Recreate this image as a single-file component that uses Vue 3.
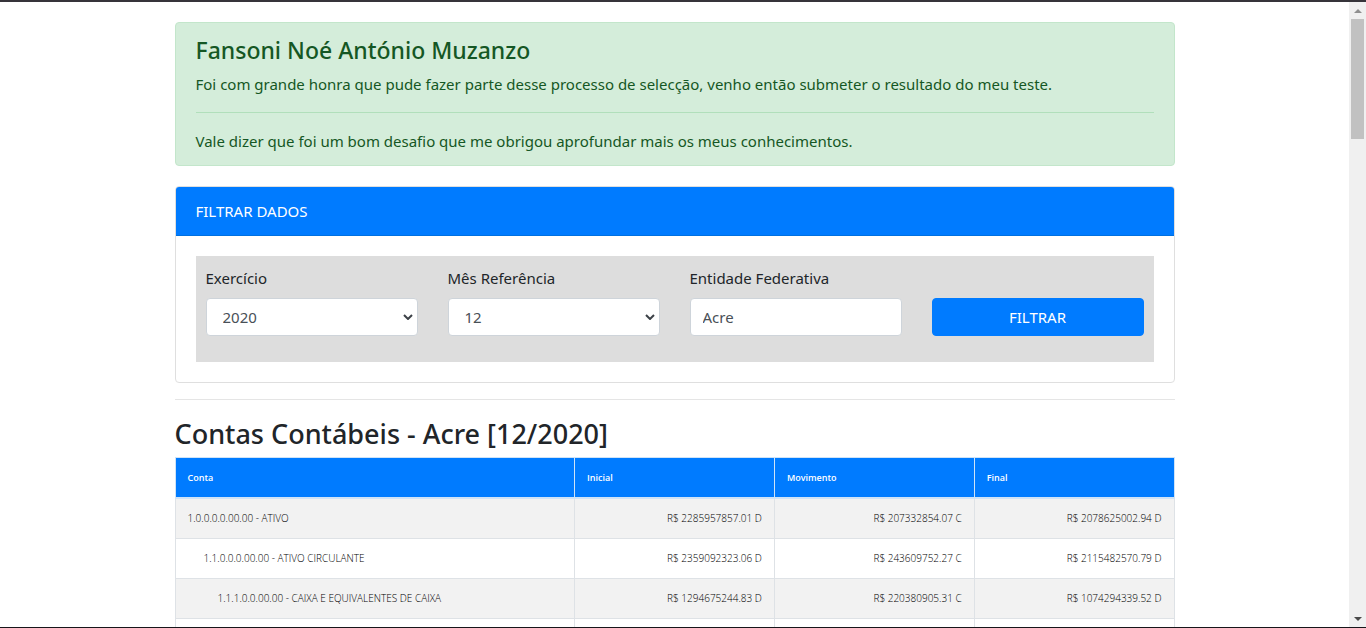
<script setup>
import { ref } from 'vue'

const year = ref('2020')
const month = ref('12')
const entity = ref('Acre')

const years = ['2020', '2019', '2018']
const months = ['12', '11', '10', '09', '08', '07', '06', '05', '04', '03', '02', '01']

const columns = ['Conta', 'Inicial', 'Movimento', 'Final']
const rows = [
  { level: 0, name: '1.0.0.0.0.00.00 - ATIVO', values: ['R$ 2285957857.01 D', 'R$ 207332854.07 C', 'R$ 2078625002.94 D'] },
  { level: 1, name: '1.1.0.0.0.00.00 - ATIVO CIRCULANTE', values: ['R$ 2359092323.06 D', 'R$ 243609752.27 C', 'R$ 2115482570.79 D'] },
  { level: 2, name: '1.1.1.0.0.00.00 - CAIXA E EQUIVALENTES DE CAIXA', values: ['R$ 1294675244.83 D', 'R$ 220380905.31 C', 'R$ 1074294339.52 D'] },
  { level: 3, name: '', values: ['', '', ''] },
]
</script>

<template>
  <div class="window">
    <div class="viewport">
      <main class="page">
        <div class="container">
          <section class="alert">
            <h4>Fansoni Noé António Muzanzo</h4>
            <p>Foi com grande honra que pude fazer parte desse processo de selecção, venho então submeter o resultado do meu teste.</p>
            <hr />
            <p>Vale dizer que foi um bom desafio que me obrigou aprofundar mais os meus conhecimentos.</p>
          </section>

          <section class="card">
            <div class="card-header">FILTRAR DADOS</div>
            <div class="card-body">
              <form class="filters" @submit.prevent>
                <div class="field">
                  <label for="year">Exercício</label>
                  <div class="select-wrap">
                    <select id="year" v-model="year" class="control">
                      <option v-for="y in years" :key="y">{{ y }}</option>
                    </select>
                    <svg class="chevron" viewBox="0 0 10 6" aria-hidden="true"><path d="M1 1l4 4 4-4" /></svg>
                  </div>
                </div>
                <div class="field">
                  <label for="month">Mês Referência</label>
                  <div class="select-wrap">
                    <select id="month" v-model="month" class="control">
                      <option v-for="m in months" :key="m">{{ m }}</option>
                    </select>
                    <svg class="chevron" viewBox="0 0 10 6" aria-hidden="true"><path d="M1 1l4 4 4-4" /></svg>
                  </div>
                </div>
                <div class="field">
                  <label for="entity">Entidade Federativa</label>
                  <input id="entity" v-model="entity" type="text" class="control" />
                </div>
                <div class="field action">
                  <button type="submit">FILTRAR</button>
                </div>
              </form>
            </div>
          </section>

          <hr class="divider" />

          <h3>Contas Contábeis - Acre [12/2020]</h3>
          <table>
            <thead>
              <tr>
                <th v-for="c in columns" :key="c" scope="col">{{ c }}</th>
              </tr>
            </thead>
            <tbody>
              <tr v-for="row in rows" :key="row.level">
                <td :class="'level-' + row.level">{{ row.name }}</td>
                <td v-for="(v, i) in row.values" :key="i" class="amount">{{ v }}</td>
              </tr>
            </tbody>
          </table>
        </div>
      </main>
      <div class="scrollbar" aria-hidden="true">
        <svg class="arrow up" viewBox="0 0 8 4"><path d="M0 4L4 0l4 4z" /></svg>
        <div class="thumb"></div>
        <svg class="arrow down" viewBox="0 0 8 4"><path d="M0 0l4 4 4-4z" /></svg>
      </div>
    </div>
  </div>
</template>

<style>
body {
  margin: 0;
  overflow: hidden;
}
</style>

<style scoped>
* {
  box-sizing: border-box;
}

.window {
  display: flex;
  flex-direction: column;
  height: 100vh;
  border-top: 2px solid #36343a;
  border-bottom: 1px solid #17151a;
  background: #fff;
  color: #212529;
  font: 400 15px/24px "Segoe UI", "Noto Sans", "Open Sans", sans-serif;
}

.viewport {
  display: flex;
  flex: 1;
  min-height: 0;
}

.page {
  flex: 1;
  overflow: hidden;
  padding-top: 20px;
}

.container {
  max-width: 1000px;
  margin: 0 auto;
}

h3,
h4 {
  margin: 0 0 6px;
  font-weight: 500;
}

h3 {
  font-size: 27px;
  line-height: 35px;
}

h4 {
  font-size: 23px;
  line-height: 31px;
}

p {
  margin: 0;
}

hr {
  height: 1px;
  margin: 16px 0;
  border: 0;
  background: #e5e5e5;
}

.alert {
  margin-bottom: 20px;
  padding: 12px 20px;
  border: 1px solid #c3e6cb;
  border-radius: 4px;
  background: #d4edda;
  color: #155724;
}

.alert hr {
  background: #b1dfbb;
}

.card {
  border: 1px solid #dfdfdf;
  border-radius: 4px;
  overflow: hidden;
}

.card-header {
  padding: 12px 20px;
  border-bottom: 1px solid #0070e0;
  background: #007bff;
  color: #fff;
}

.card-body {
  padding: 20px;
}

.filters {
  display: grid;
  grid-template-columns: repeat(4, 1fr);
  gap: 30px;
  padding: 10px 10px 26px;
  background: #ddd;
}

.field {
  display: flex;
  flex-direction: column;
  gap: 8px;
  min-width: 0;
}

.action {
  justify-content: flex-end;
}

.select-wrap {
  position: relative;
}

.control {
  display: block;
  width: 100%;
  height: 38px;
  padding: 6px 12px;
  border: 1px solid #ced4da;
  border-radius: 4px;
  background: #fff;
  color: #495057;
  font: inherit;
  appearance: none;
}

select.control {
  padding-left: 16px;
}

.chevron {
  position: absolute;
  top: 16px;
  right: 5px;
  width: 10px;
  height: 6px;
  fill: none;
  stroke: #3c4147;
  stroke-width: 2;
  pointer-events: none;
}

button {
  height: 38px;
  border: 1px solid #007bff;
  border-radius: 4px;
  background: #007bff;
  color: #fff;
  font: inherit;
}

table {
  width: 100%;
  border-collapse: collapse;
  table-layout: fixed;
  color: #000;
  font-family: "Segoe UI", "Open Sans", "Noto Sans", sans-serif;
  font-size: 10px;
  font-weight: 300;
  line-height: 15px;
}

th,
td {
  height: 40px;
  padding: 12px;
  border: 1px solid #dee2e6;
  text-align: left;
}

th {
  width: 20%;
  border-color: #cfe3f7;
  border-bottom-width: 2px;
  background: #007bff;
  color: #fff;
  font-size: 9px;
  font-weight: 600;
}

th:first-child {
  width: 40%;
}

tbody tr:nth-child(odd) {
  background: #f2f2f2;
}

td.amount {
  text-align: right;
}

td.level-1 {
  padding-left: 28px;
}

td.level-2 {
  padding-left: 42px;
}

.scrollbar {
  display: flex;
  flex-direction: column;
  align-items: center;
  width: 17px;
  padding: 7px 0 6px;
  background: #f0f0f0;
}

.arrow {
  width: 8px;
  height: 4px;
}

.up {
  fill: #8f8f8f;
}

.down {
  margin-top: auto;
  fill: #4a4a4a;
}

.thumb {
  width: 13px;
  height: 120px;
  margin-top: 6px;
  background: #c1c1c1;
}
</style>
